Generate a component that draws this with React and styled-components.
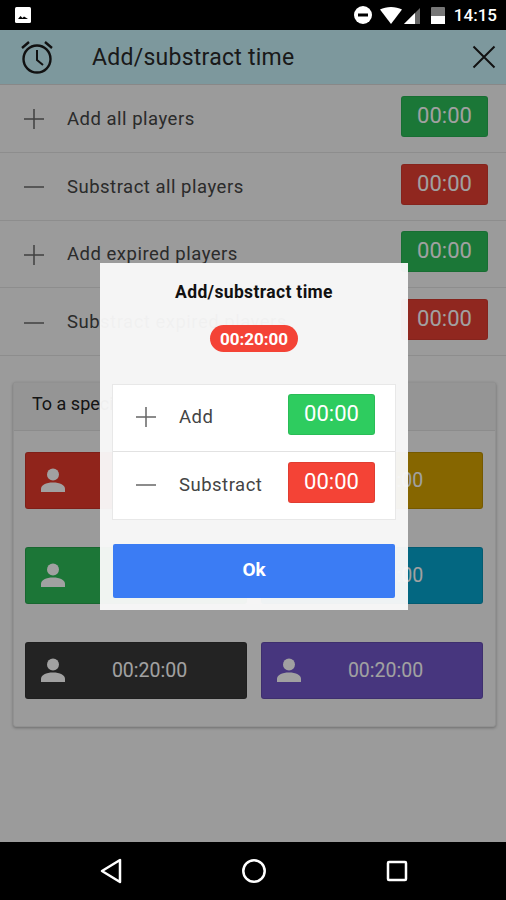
import React from "react";
import styled, { createGlobalStyle } from "styled-components";

const GlobalStyle = createGlobalStyle`
  html, body {
    margin: 0;
    padding: 0;
    background: #000;
    font-family: Roboto, "Liberation Sans", sans-serif;
  }
  * { box-sizing: border-box; }
`;

const GREEN = "#2ecc5f";
const RED = "#f44336";
const ROW_GREEN = "#2bbd58";
const ROW_RED = "#e53e32";

const topRows = [
  { sign: "plus", label: "Add all players", color: ROW_GREEN },
  { sign: "minus", label: "Substract all players", color: ROW_RED },
  { sign: "plus", label: "Add expired players", color: ROW_GREEN },
  { sign: "minus", label: "Substract expired players", color: ROW_RED },
];

const players = ["#e53a2c", "#d4a200", "#2dbb58", "#06a4cd", "#383838", "#7156c8"];

const PlusIcon = () => (
  <svg width="24" height="24" viewBox="0 0 24 24">
    <path d="M12 2v20M2 12h20" stroke="currentColor" strokeWidth="1.5" fill="none" />
  </svg>
);

const MinusIcon = () => (
  <svg width="24" height="24" viewBox="0 0 24 24">
    <path d="M2 12h20" stroke="currentColor" strokeWidth="1.5" fill="none" />
  </svg>
);

const PersonIcon = () => (
  <svg width="24" height="24" viewBox="0 0 24 24">
    <circle cx="12" cy="6.500" r="6" fill="#fff" />
    <path d="M0 24v-3c0-4 5-6.500 12-6.500s12 2.500 12 6.500v3z" fill="#fff" />
  </svg>
);

const ClockIcon = () => (
  <svg width="34" height="36" viewBox="0 0 34 36" fill="none" stroke="#1c1c1c" strokeWidth="2.4">
    <circle cx="17" cy="20" r="13.500" />
    <path d="M17 11v10l6 5" strokeWidth="2" />
    <path d="M2 9l7-6M32 9l-7-6" />
  </svg>
);

const CloseIcon = () => (
  <svg width="24" height="24" viewBox="0 0 24 24">
    <path d="M1.500 1.500l21 21M22.500 1.500l-21 21" stroke="#1c1c1c" strokeWidth="2" fill="none" />
  </svg>
);

const StatusIcons = () => (
  <svg width="94" height="20" viewBox="0 0 94 20">
    <circle cx="9" cy="10" r="9" fill="#fff" />
    <rect x="4" y="8.500" width="10" height="3" fill="#000" />
    <path d="M26 4.500C32 1 42 1 48 4.500L37 19z" fill="#fff" />
    <path d="M50 19h16V3z" fill="#666" />
    <path d="M50 19h11V8z" fill="#fff" />
    <rect x="77" y="2" width="14" height="17" rx="1" fill="#777" />
    <rect x="77" y="11" width="14" height="8" fill="#fff" />
  </svg>
);

const PictureIcon = () => (
  <svg width="16" height="16" viewBox="0 0 16 16">
    <rect width="16" height="16" rx="1.500" fill="#fff" />
    <path d="M3 12l2.500-3 2 2 1.500-1.500L13 12z" fill="#000" />
  </svg>
);

const App = () => {
  return (
    <>
      <GlobalStyle />
      <Screen>
        <StatusBar>
          <PictureIcon />
          <StatusRight>
            <StatusIcons />
            <Time>14:15</Time>
          </StatusRight>
        </StatusBar>
        <Content>
          <Header>
            <ClockIcon />
            <HeaderTitle>Add/substract time</HeaderTitle>
            <CloseIcon />
          </Header>
          {topRows.map((row) => (
            <Row key={row.label}>
              <SignBox>{row.sign === "plus" ? <PlusIcon /> : <MinusIcon />}</SignBox>
              <RowLabel>{row.label}</RowLabel>
              <TimeButton $color={row.color}>00:00</TimeButton>
            </Row>
          ))}
          <Card>
            <CardHeader>To a specific player</CardHeader>
            <PlayerGrid>
              {players.map((color, i) => (
                <PlayerButton key={i} $color={color}>
                  <PersonIcon />
                  <PlayerTime>00:20:00</PlayerTime>
                </PlayerButton>
              ))}
            </PlayerGrid>
          </Card>
          <Backdrop>
            <Dialog>
              <DialogTitle>Add/substract time</DialogTitle>
              <Badge>00:20:00</Badge>
              <DialogList>
                <DialogRow>
                  <DialogSign>
                    <PlusIcon />
                  </DialogSign>
                  <DialogLabel>Add</DialogLabel>
                  <DialogTime $color={GREEN}>00:00</DialogTime>
                </DialogRow>
                <DialogRow>
                  <DialogSign>
                    <MinusIcon />
                  </DialogSign>
                  <DialogLabel>Substract</DialogLabel>
                  <DialogTime $color={RED}>00:00</DialogTime>
                </DialogRow>
              </DialogList>
              <OkButton>Ok</OkButton>
            </Dialog>
          </Backdrop>
        </Content>
        <NavBar>
          <svg width="24" height="26" viewBox="0 0 24 26">
            <path d="M21 2v22L3 13z" fill="none" stroke="#fff" strokeWidth="2.500" strokeLinejoin="round" />
          </svg>
          <svg width="26" height="26" viewBox="0 0 26 26">
            <circle cx="13" cy="13" r="10.700" fill="none" stroke="#fff" strokeWidth="2.500" />
          </svg>
          <svg width="24" height="24" viewBox="0 0 24 24">
            <rect x="3" y="3" width="18" height="18" rx="1" fill="none" stroke="#fff" strokeWidth="2.500" />
          </svg>
        </NavBar>
      </Screen>
    </>
  );
};

export default App;

const Screen = styled.div`
  width: 506px;
  height: 900px;
  display: flex;
  flex-direction: column;
  overflow: hidden;
  background: #000;
`;

const StatusBar = styled.div`
  height: 30px;
  flex-shrink: 0;
  display: flex;
  align-items: center;
  justify-content: space-between;
  padding: 0 9px 1px 15px;
  background: #000;
`;

const StatusRight = styled.div`
  display: flex;
  align-items: center;
  gap: 6px;
`;

const Time = styled.span`
  color: #fff;
  font-size: 17px;
  font-weight: 500;
`;

const Content = styled.div`
  position: relative;
  flex: 1;
  display: flex;
  flex-direction: column;
  background: #f5f5f5;
`;

const Header = styled.div`
  height: 55px;
  flex-shrink: 0;
  display: flex;
  align-items: center;
  padding: 0 10px 0 20px;
  background: #c7f1f9;
  border-bottom: 1px solid #d8d8d8;
`;

const HeaderTitle = styled.div`
  flex: 1;
  margin-left: 38px;
  font-size: 23px;
  letter-spacing: 0.25px;
  color: #2a2a2a;
`;

const Row = styled.div`
  height: 67.800px;
  flex-shrink: 0;
  display: flex;
  align-items: center;
  padding: 0 18px 4px 22px;
  border-bottom: 1.500px solid #e0e0e0;
  color: #555;
`;

const SignBox = styled.div`
  width: 24px;
  height: 24px;
  margin-top: 6px;
  color: #666;
`;

const RowLabel = styled.div`
  flex: 1;
  margin-left: 21px;
  margin-top: 5px;
  font-size: 18.500px;
  letter-spacing: 0.5px;
  color: #444;
`;

const TimeButton = styled.div`
  width: 87px;
  height: 41px;
  display: flex;
  align-items: center;
  justify-content: center;
  padding-bottom: 2px;
  border-radius: 3px;
  border: 1px solid rgba(0, 0, 0, 0.08);
  font-size: 22px;
  color: #fff;
  background: ${(p) => p.$color};
`;

const Card = styled.div`
  margin: 25.800px 10px 0 13px;
  height: 345px;
  background: #f5f5f5;
  border: 1px solid #e6e6e6;
  border-radius: 3px;
  box-shadow: 0 1px 3px rgba(0, 0, 0, 0.3);
`;

const CardHeader = styled.div`
  height: 48px;
  display: flex;
  align-items: center;
  padding: 0 0 5px 18px;
  background: #ededed;
  border-bottom: 1px solid #dedede;
  font-size: 18px;
  color: #222;
`;

const PlayerGrid = styled.div`
  display: grid;
  grid-template-columns: 222px 222px;
  grid-auto-rows: 57px;
  column-gap: 14px;
  row-gap: 38px;
  padding: 21px 0 0 11px;
`;

const PlayerButton = styled.div`
  display: flex;
  align-items: center;
  padding-left: 15px;
  border-radius: 3px;
  border: 1px solid rgba(0, 0, 0, 0.12);
  background: ${(p) => p.$color};
`;

const PlayerTime = styled.div`
  flex: 1;
  padding-right: 12px;
  text-align: center;
  font-size: 19.500px;
  color: #fff;
`;

const Backdrop = styled.div`
  position: absolute;
  inset: 0;
  display: flex;
  align-items: center;
  justify-content: center;
  padding: 1px 0 0 2px;
  background: rgba(0, 0, 0, 0.37);
`;

const Dialog = styled.div`
  width: 308px;
  height: 347px;
  display: flex;
  flex-direction: column;
  align-items: center;
  padding: 20px 13px 0;
  background: rgba(249, 249, 249, 0.96);
`;

const DialogTitle = styled.div`
  font-size: 17.500px;
  font-weight: 700;
  letter-spacing: 0.35px;
  line-height: 18px;
  color: #111;
`;

const Badge = styled.div`
  margin-top: 24px;
  width: 88px;
  height: 27px;
  display: flex;
  align-items: center;
  justify-content: center;
  border-radius: 14px;
  font-size: 17px;
  font-weight: 700;
  color: #fff;
  background: ${RED};
`;

const DialogList = styled.div`
  margin-top: 32px;
  width: 284px;
  background: #fff;
  border: 1px solid #e8e8e8;
`;

const DialogRow = styled.div`
  height: 67px;
  display: flex;
  align-items: center;
  padding: 0 20px 0 21px;
  border-bottom: 1px solid #e2e2e2;
  &:last-child {
    border-bottom: none;
  }
`;

const DialogSign = styled.div`
  width: 24px;
  height: 24px;
  margin-top: -2px;
  color: #666;
`;

const DialogLabel = styled.div`
  flex: 1;
  margin-left: 21px;
  padding-bottom: 2px;
  font-size: 18.500px;
  letter-spacing: 0.5px;
  color: #444;
`;

const DialogTime = styled(TimeButton)`
  margin-top: -7px;
`;

const OkButton = styled.div`
  margin-top: 24px;
  width: 282px;
  height: 54px;
  display: flex;
  align-items: center;
  justify-content: center;
  padding-bottom: 3px;
  border-radius: 2px;
  font-size: 19px;
  font-weight: 700;
  color: #fff;
  background: #3b7cf4;
`;

const NavBar = styled.div`
  height: 58px;
  flex-shrink: 0;
  display: flex;
  align-items: center;
  justify-content: space-between;
  padding: 0 97px 0 99px;
  background: #000;
`;
